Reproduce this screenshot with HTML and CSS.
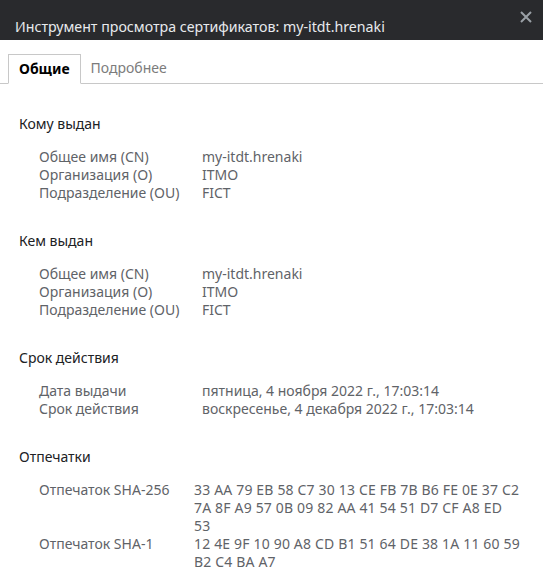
FILE: index.html
```html
<!DOCTYPE html>
<html lang="ru">
<head>
<meta charset="utf-8">
<title>Certificate viewer</title>
<link rel="stylesheet" href="styles.css">
</head>
<body>
<div class="header">
  <div class="title">Инструмент просмотра сертификатов: my-itdt.hrenaki</div>
  <svg class="close" width="12" height="12" viewBox="0 0 12 12"><path d="M1 1L11 11M11 1L1 11" stroke="#9aa0a6" stroke-width="2"/></svg>
</div>
<div class="tabs">
  <div class="tab active">Общие</div>
  <div class="tab">Подробнее</div>
  <div class="tab-fill"></div>
</div>
<div class="content">
  <div class="section">
    <div class="heading">Кому выдан</div>
    <div class="grid">
      <div>Общее имя (CN)</div><div>my-itdt.hrenaki</div>
      <div>Организация (O)</div><div>ITMO</div>
      <div>Подразделение (OU)</div><div>FICT</div>
    </div>
  </div>
  <div class="section">
    <div class="heading">Кем выдан</div>
    <div class="grid">
      <div>Общее имя (CN)</div><div>my-itdt.hrenaki</div>
      <div>Организация (O)</div><div>ITMO</div>
      <div>Подразделение (OU)</div><div>FICT</div>
    </div>
  </div>
  <div class="section">
    <div class="heading">Срок действия</div>
    <div class="grid">
      <div>Дата выдачи</div><div>пятница, 4 ноября 2022 г., 17:03:14</div>
      <div>Срок действия</div><div>воскресенье, 4 декабря 2022 г., 17:03:14</div>
    </div>
  </div>
  <div class="section">
    <div class="heading">Отпечатки</div>
    <div class="grid grid-fp">
      <div>Отпечаток SHA-256</div><div class="hex">33 AA 79 EB 58 C7 30 13 CE FB 7B B6 FE 0E 37 C2<br>7A 8F A9 57 0B 09 82 AA 41 54 51 D7 CF A8 ED<br>53</div>
      <div>Отпечаток SHA-1</div><div class="hex">12 4E 9F 10 90 A8 CD B1 51 64 DE 38 1A 11 60 59<br>B2 C4 BA A7</div>
    </div>
  </div>
</div>
</body>
</html>
```
FILE: styles.css
```css
html, body {
  margin: 0;
  padding: 0;
  background: #ffffff;
  font-family: "Noto Sans", "Open Sans", sans-serif;
  font-size: 14px;
  color: #5f6368;
  overflow: hidden;
}
.header {
  height: 40px;
  background: #292a2d;
  position: relative;
  display: flex;
  align-items: flex-end;
}
.title {
  color: #e8eaed;
  font-size: 14.2px;
  line-height: 20px;
  padding: 0 0 3px 15px;
}
.close {
  position: absolute;
  right: 11px;
  top: 11px;
}
.tabs {
  display: flex;
  align-items: flex-end;
  padding-top: 14px;
  height: 30px;
}
.tabs::before {
  content: "";
  width: 8px;
  align-self: stretch;
  border-bottom: 1px solid #c8c8c8;
}
.tab {
  height: 29px;
  line-height: 28px;
  padding: 0 10px;
  font-size: 14px;
  color: #7c7c7c;
  border-bottom: 1px solid #c8c8c8;
}
.tab.active {
  color: #000;
  font-weight: bold;
  border: 1px solid #c8c8c8;
  border-bottom: 1px solid transparent;
  height: 28px;
}
.tab-fill {
  flex: 1;
  align-self: stretch;
  border-bottom: 1px solid #c8c8c8;
}
.content {
  padding: 30px 19px 0 19px;
}
.section {
  margin-bottom: 29px;
}
.heading {
  color: #202124;
  font-size: 14px;
  line-height: 20px;
  margin-bottom: 14px;
}
.grid {
  display: grid;
  grid-template-columns: 163px auto;
  padding-left: 20px;
  line-height: 18px;
}
.grid-fp {
  grid-template-columns: 155px 1fr;
}
.hex {
  letter-spacing: 0.17px;
}
```
